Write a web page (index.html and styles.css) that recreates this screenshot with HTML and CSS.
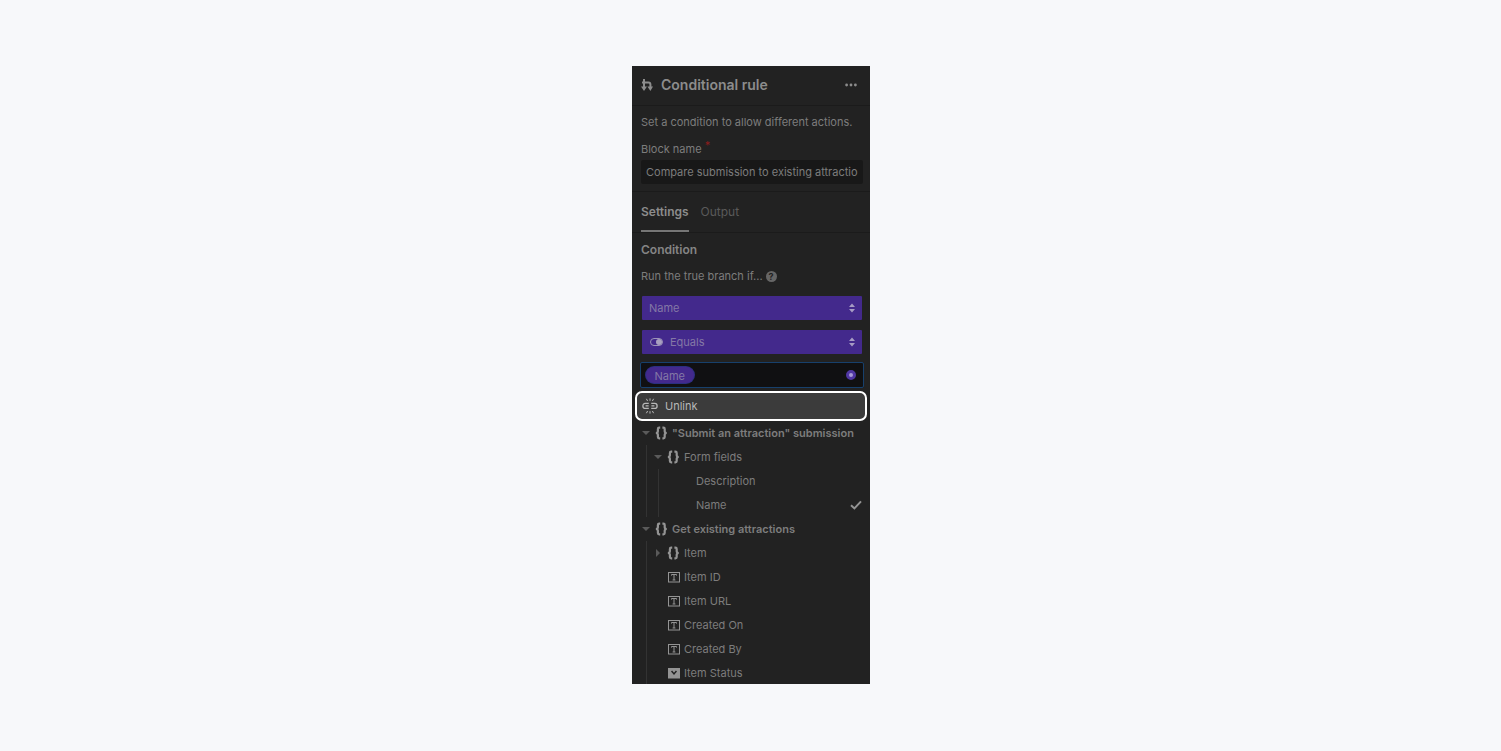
FILE: index.html
```html
<!DOCTYPE html>
<html lang="en">
<head>
    <meta charset="UTF-8">
    <title>Conditional rule</title>
    <link rel="stylesheet" href="styles.css">
</head>
<body>
    <svg class="sprites" width="0" height="0">
        <symbol id="braces" viewBox="0 0 14 14">
            <path d="M6.2 1.6H5.2C4.3 1.6 3.9 2.1 3.9 2.9V5.3C3.9 6.2 3.4 6.8 2 7C3.4 7.2 3.9 7.8 3.9 8.7V11.1C3.9 11.9 4.3 12.4 5.2 12.4H6.2M8.4 1.6H9.4C10.3 1.6 10.7 2.1 10.7 2.9V5.3C10.7 6.2 11.2 6.8 12.6 7C11.2 7.2 10.7 7.8 10.7 8.7V11.1C10.7 11.9 10.3 12.4 9.4 12.4H8.4" fill="none" stroke="currentColor" stroke-width="2.2"/>
        </symbol>
        <symbol id="text-field" viewBox="0 0 14 14">
            <rect x="2.5" y="2.5" width="11" height="9.5" fill="none" stroke="currentColor"/>
            <path d="M5.5 5.6V4.5H10.5V5.6M8 4.5V10M6.6 10H9.4" fill="none" stroke="currentColor"/>
        </symbol>
        <symbol id="option-field" viewBox="0 0 14 14">
            <path fill-rule="evenodd" d="M2 2H14V12.5H2ZM5 5.4L8 8.9L11 5.4L9.9 4.6L8 6.8L6.1 4.6Z" fill="currentColor"/>
        </symbol>
        <symbol id="updown" viewBox="0 0 8 12">
            <path d="M4 1.5L7 5H1ZM4 10.5L1 7H7Z" fill="currentColor"/>
        </symbol>
    </svg>

    <div class="panel">
        <div class="panel-header">
            <svg class="block-icon" width="12" height="14" viewBox="0 0 12 14">
                <path d="M3 1V9M1 4.6H7.5C9 4.6 9.4 5.3 9.4 6.5V9" fill="none" stroke="currentColor" stroke-width="2"/>
                <path d="M0 8.4H6L3 13ZM6.4 8.4H12L9.4 13Z" fill="currentColor"/>
            </svg>
            <h1 class="panel-title">Conditional rule</h1>
            <svg class="more-icon" width="12" height="4" viewBox="0 0 12 4">
                <circle cx="1.6" cy="2" r="1.4" fill="currentColor"/>
                <circle cx="6" cy="2" r="1.4" fill="currentColor"/>
                <circle cx="10.4" cy="2" r="1.4" fill="currentColor"/>
            </svg>
        </div>

        <div class="block-info">
            <p class="intro">Set a condition to allow different actions.</p>
            <div class="field-label">Block name <span class="required">*</span></div>
            <div class="name-input">Compare submission to existing attractio</div>
        </div>

        <div class="tabs">
            <div class="tab active">Settings</div>
            <div class="tab">Output</div>
        </div>

        <div class="condition">
            <h2 class="section-title">Condition</h2>
            <div class="hint">
                Run the true branch if...
                <span class="help-icon">?</span>
            </div>
            <div class="select">
                <span>Name</span>
                <svg class="updown" width="8" height="12"><use href="#updown"/></svg>
            </div>
            <div class="select">
                <span class="toggle-icon"></span>
                <span>Equals</span>
                <svg class="updown" width="8" height="12"><use href="#updown"/></svg>
            </div>
            <div class="bound-input">
                <span class="pill">Name</span>
                <span class="bound-dot"></span>
            </div>
        </div>

        <div class="unlink">
            <svg width="16" height="16" viewBox="0 0 16 16">
                <path d="M6.8 5.4H3.2C1.8 5.4 .9 6.5 .9 7.9C.9 9.3 1.8 10.4 3.2 10.4H6.8M9.2 5.4H12.8C14.2 5.4 15.1 6.5 15.1 7.9C15.1 9.3 14.2 10.4 12.8 10.4H9.2M3.6 7.9H6.6M9.4 7.9H12.4" fill="none" stroke="currentColor" stroke-width="1.3"/>
                <path d="M4.4 .8L5.6 3M8 .4V2.8M11.6 .8L10.4 3M4.4 15.2L5.6 13M8 15.6V13.2M11.6 15.2L10.4 13" fill="none" stroke="currentColor"/>
            </svg>
            <span>Unlink</span>
        </div>

        <div class="tree">
            <div class="row row-bold">
                <span class="caret"></span>
                <svg class="row-icon" width="14" height="14"><use href="#braces"/></svg>
                <span>"Submit an attraction" submission</span>
            </div>
            <div class="children">
                <div class="row">
                    <span class="caret"></span>
                    <svg class="row-icon" width="14" height="14"><use href="#braces"/></svg>
                    <span>Form fields</span>
                </div>
                <div class="children">
                    <div class="row">
                        <span class="caret-slot"></span>
                        <span class="icon-slot"></span>
                        <span>Description</span>
                    </div>
                    <div class="row">
                        <span class="caret-slot"></span>
                        <span class="icon-slot"></span>
                        <span>Name</span>
                        <svg class="check" width="12" height="10" viewBox="0 0 12 10">
                            <path d="M1 5.2L4.4 8.4L11 1.4" fill="none" stroke="currentColor" stroke-width="2"/>
                        </svg>
                    </div>
                </div>
            </div>

            <div class="row row-bold">
                <span class="caret"></span>
                <svg class="row-icon" width="14" height="14"><use href="#braces"/></svg>
                <span>Get existing attractions</span>
            </div>
            <div class="children">
                <div class="row">
                    <span class="caret caret-closed"></span>
                    <svg class="row-icon" width="14" height="14"><use href="#braces"/></svg>
                    <span>Item</span>
                </div>
                <div class="row">
                    <span class="caret-slot"></span>
                    <svg class="row-icon" width="14" height="14"><use href="#text-field"/></svg>
                    <span>Item ID</span>
                </div>
                <div class="row">
                    <span class="caret-slot"></span>
                    <svg class="row-icon" width="14" height="14"><use href="#text-field"/></svg>
                    <span>Item URL</span>
                </div>
                <div class="row">
                    <span class="caret-slot"></span>
                    <svg class="row-icon" width="14" height="14"><use href="#text-field"/></svg>
                    <span>Created On</span>
                </div>
                <div class="row">
                    <span class="caret-slot"></span>
                    <svg class="row-icon" width="14" height="14"><use href="#text-field"/></svg>
                    <span>Created By</span>
                </div>
                <div class="row">
                    <span class="caret-slot"></span>
                    <svg class="row-icon" width="14" height="14"><use href="#option-field"/></svg>
                    <span>Item Status</span>
                </div>
            </div>
        </div>
    </div>
</body>
</html>
```

FILE: styles.css
```css
* {
    box-sizing: border-box;
    margin: 0;
    padding: 0;
}
html, body {
    height: 751px;
    overflow: hidden;
}
body {
    font-family: Inter, 'Liberation Sans', sans-serif;
    font-size: 11px;
    line-height: 16px;
    color: #7d7d7d;
    background-color: #f7f8fa;
    padding: 66px 0 0 632px;
}
.sprites {
    display: block;
    height: 0;
}
.panel {
    width: 238px;
    height: 618px;
    overflow: hidden;
    background: #222;
}
.panel-header {
    display: flex;
    align-items: center;
    height: 40px;
    padding: 0 13px 2px 9px;
    border-bottom: 1px solid #1b1b1b;
    color: #8c8c8c;
}
.block-icon {
    flex: none;
}
.panel-title {
    flex: 1;
    margin-left: 8px;
    font-size: 14px;
    font-weight: 600;
    color: #8c8c8c;
}
.block-info {
    height: 86px;
    padding: 8px 7px 0 9px;
    border-bottom: 1px solid #1b1b1b;
}
.field-label {
    margin-top: 11px;
}
.required {
    position: relative;
    top: -4px;
    color: #8c1c1c;
}
.name-input {
    height: 24px;
    margin-top: 3px;
    padding: 0 5px;
    line-height: 24px;
    color: #7d7d7d;
    background: #181818;
    border-radius: 2px;
    white-space: nowrap;
    overflow: hidden;
}
.tabs {
    display: flex;
    gap: 12px;
    height: 41px;
    padding: 0 9px;
    border-bottom: 1px solid #1b1b1b;
}
.tab {
    height: 40px;
    padding-top: 12px;
    font-size: 12px;
    color: #5a5a5a;
}
.tab.active {
    font-weight: 600;
    color: #8c8c8c;
    border-bottom: 2px solid #767676;
}
.condition {
    height: 158px;
    padding: 9px 6px 0 8px;
}
.section-title {
    padding-left: 1px;
    font-size: 12px;
    font-weight: 600;
    line-height: 15px;
    color: #858585;
}
.hint {
    display: flex;
    align-items: center;
    gap: 3px;
    margin-top: 11px;
    padding-left: 1px;
}
.help-icon {
    width: 11px;
    height: 11px;
    border-radius: 50%;
    background: #666;
    color: #222;
    font-size: 9px;
    font-weight: 700;
    line-height: 11px;
    text-align: center;
}
.select {
    display: flex;
    align-items: center;
    gap: 7px;
    height: 24px;
    margin: 12px 2px 0 2px;
    padding: 0 6px 0 7px;
    color: #8478a6;
    background: #43298c;
    border-radius: 1px;
}
.select + .select {
    margin-top: 10px;
}
.updown {
    margin-left: auto;
    color: #a79cc4;
}
.toggle-icon {
    position: relative;
    width: 13px;
    height: 8px;
    margin-left: 1px;
    border: 1px solid #9c93b8;
    border-radius: 4px;
}
.toggle-icon::after {
    content: "";
    position: absolute;
    top: 0;
    right: 0;
    width: 6px;
    height: 6px;
    border-radius: 50%;
    background: #a8a0c0;
}
.bound-input {
    display: flex;
    align-items: center;
    justify-content: space-between;
    height: 26px;
    margin-top: 8px;
    padding: 0 7px 0 5px;
    background: #101012;
    border: 1px solid #17406c;
    border-radius: 2px;
}
.pill {
    height: 16px;
    padding: 0 8.5px;
    line-height: 18px;
    color: #8478a6;
    background: #43298c;
    border-radius: 8px;
    box-shadow: 0 0 0 1px #2b2f80;
}
.bound-dot {
    width: 10px;
    height: 10px;
    border-radius: 50%;
    border: 3px solid #4f36a3;
    background: #a79ad6;
}
.unlink {
    display: flex;
    align-items: center;
    gap: 7px;
    height: 30px;
    margin: 0 3px;
    padding: 0 0 1px 5px;
    color: #b8b8b8;
    background: #3b3b3b;
    border: 2px solid #fff;
    border-radius: 7px;
}
.tree {
    padding-left: 9px;
}
.row {
    display: flex;
    align-items: center;
    height: 24px;
    padding-right: 8px;
    white-space: nowrap;
}
.row-bold {
    font-weight: 600;
    color: #7d7d7d;
}
.children {
    margin-left: 5px;
    border-left: 1px solid #333;
}
.children .row {
    padding-left: 6px;
}
.children .children {
    margin-left: 11px;
}
.caret,
.caret-slot {
    flex: none;
    width: 10px;
    height: 10px;
}
.caret {
    position: relative;
}
.caret::before {
    content: "";
    position: absolute;
    top: 3px;
    left: 1px;
    border-style: solid;
    border-width: 4px 4px 0;
    border-color: #5a5a5a transparent transparent;
}
.caret-closed::before {
    top: 1px;
    left: 3px;
    border-width: 4px 0 4px 4px;
    border-color: transparent transparent transparent #5a5a5a;
}
.row-icon,
.icon-slot {
    flex: none;
    width: 14px;
    margin: 0 4px 0 3px;
    color: #949494;
}
.check {
    margin-left: auto;
    color: #949494;
}
```
